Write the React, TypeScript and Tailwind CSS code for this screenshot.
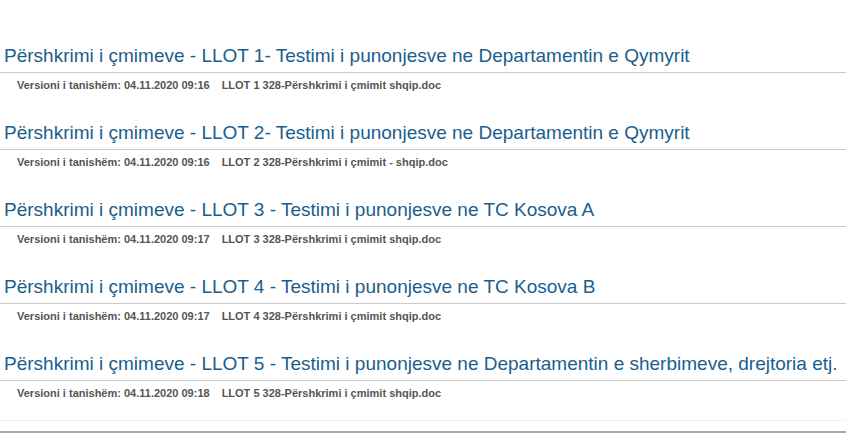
import React from "react";

const items = [
  {
    title: "Përshkrimi i çmimeve - LLOT 1- Testimi i punonjesve ne Departamentin e Qymyrit",
    date: "04.11.2020 09:16",
    file: "LLOT 1 328-Përshkrimi i çmimit shqip.doc",
  },
  {
    title: "Përshkrimi i çmimeve - LLOT 2- Testimi i punonjesve ne Departamentin e Qymyrit",
    date: "04.11.2020 09:16",
    file: "LLOT 2 328-Përshkrimi i çmimit - shqip.doc",
  },
  {
    title: "Përshkrimi i çmimeve - LLOT 3 - Testimi i punonjesve ne TC Kosova A",
    date: "04.11.2020 09:17",
    file: "LLOT 3 328-Përshkrimi i çmimit shqip.doc",
  },
  {
    title: "Përshkrimi i çmimeve - LLOT 4 - Testimi i punonjesve ne TC Kosova B",
    date: "04.11.2020 09:17",
    file: "LLOT 4 328-Përshkrimi i çmimit shqip.doc",
  },
  {
    title: "Përshkrimi i çmimeve - LLOT 5 - Testimi i punonjesve ne Departamentin e sherbimeve, drejtoria etj.",
    date: "04.11.2020 09:18",
    file: "LLOT 5 328-Përshkrimi i çmimit shqip.doc",
  },
];

export default function App() {
  return (
    <div
      className="w-[846px] h-[433px] bg-white overflow-hidden flex flex-col"
      style={{ fontFamily: '"Liberation Sans", Arial, sans-serif' }}
    >
      <div className="pt-[44px] flex flex-col">
        {items.map((it, i) => (
          <div key={i} className="flex flex-col pb-[28px]">
            <div className="border-b border-[#cccccc] pb-[5px] pl-[4px] text-[19px] leading-[23px] text-[#1a5e8e] whitespace-nowrap">
              {it.title}
            </div>
            <div className="mt-[5px] pl-[17px] text-[11px] leading-[15px] font-bold text-[#555555] flex gap-[12px] whitespace-nowrap">
              <span>Versioni i tanishëm: {it.date}</span>
              <span>{it.file}</span>
            </div>
          </div>
        ))}
      </div>
      <div className="mt-[-9px] border-b border-dotted border-[#e2e2e2]" />
      <div className="mt-[10px] h-[2px] bg-[#aaaaaa]" />
    </div>
  );
}
